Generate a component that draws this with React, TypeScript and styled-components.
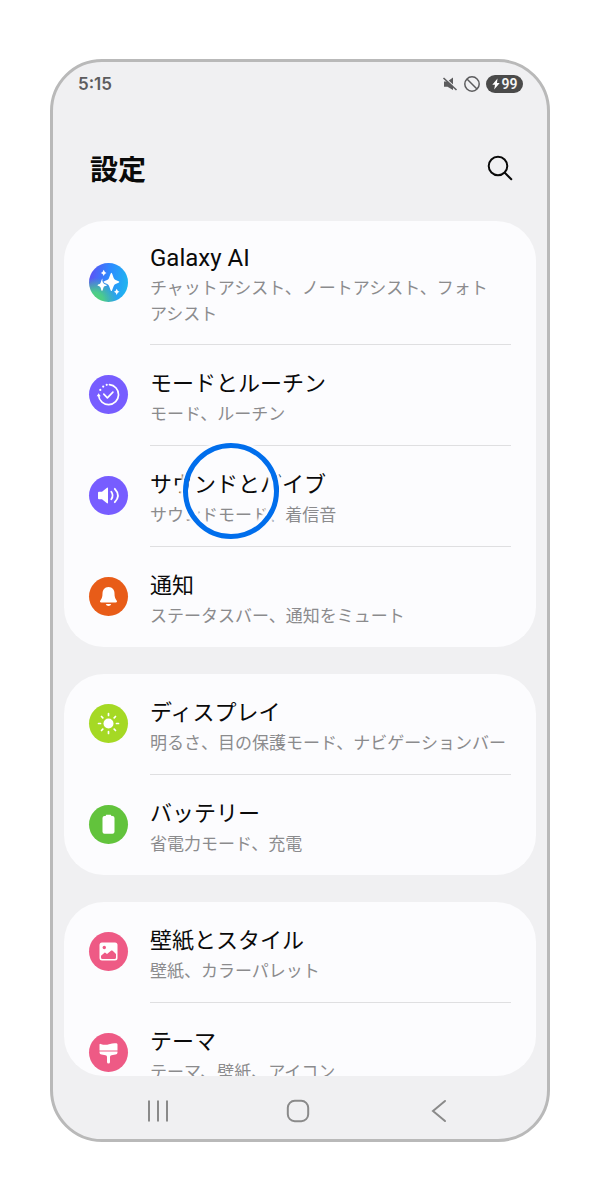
import React from 'react';
import styled, { createGlobalStyle } from 'styled-components';

const GlobalStyle = createGlobalStyle`
  *, *::before, *::after { box-sizing: border-box; }
  body {
    margin: 0;
    background: #ffffff;
    font-family: Roboto, 'Noto Sans CJK JP', sans-serif;
  }
`;

const Page = styled.div`
  display: flex;
  height: 100vh;
  padding: 59px 50px 58px;
`;

const Phone = styled.main`
  flex: 1;
  min-width: 0;
  display: flex;
  flex-direction: column;
  background: #f0f0f2;
  border: 3px solid #b9b9b9;
  border-radius: 52px;
  overflow: hidden;
`;

const StatusBar = styled.div`
  display: flex;
  align-items: center;
  justify-content: space-between;
  height: 44px;
  padding: 0 24px 0 25px;
  color: #5c5c5e;
`;

const Clock = styled.span`
  font-family: Inter, sans-serif;
  font-size: 17px;
  font-weight: 600;
  line-height: 20px;
`;

const StatusIcons = styled.div`
  display: flex;
  align-items: center;
  gap: 6px;
`;

const BatteryPill = styled.span`
  display: flex;
  align-items: center;
  justify-content: center;
  gap: 2px;
  width: 37px;
  height: 18px;
  border-radius: 9px;
  background: #4a4a4a;
  color: #f4f4f4;
  font-size: 14px;
  font-weight: 600;
  line-height: 18px;
`;

const Header = styled.header`
  display: flex;
  align-items: center;
  justify-content: space-between;
  height: 115px;
  padding: 8px 33px 0 37px;
`;

const Title = styled.h1`
  margin: 0;
  padding-top: 6px;
  font-size: 28px;
  font-weight: 700;
  line-height: 40px;
  color: #0a0a0a;
`;

const IconButton = styled.button`
  display: flex;
  align-items: center;
  justify-content: center;
  padding: 0;
  border: 0;
  background: none;
  color: inherit;
`;

const List = styled.div`
  flex: 1;
  min-height: 0;
  display: flex;
  flex-direction: column;
  gap: 27px;
  margin: 0 11px;
  border-radius: 0 0 40px 40px;
  overflow: hidden;
`;

const Card = styled.section`
  flex-shrink: 0;
  border-radius: 40px;
  background: #fcfcfe;
`;

const Row = styled.a`
  display: flex;
  align-items: center;
  gap: 22px;
  padding: 0 25px;
  color: inherit;
  text-decoration: none;
`;

const Badge = styled.span<{ $fill: string }>`
  flex-shrink: 0;
  display: flex;
  width: 39px;
  height: 39px;
  margin-bottom: 2px;
  border-radius: 50%;
  background: ${(p) => p.$fill};
`;

const RowText = styled.span`
  position: relative;
  flex: 1;
  min-width: 0;
  display: flex;
  flex-direction: column;
  justify-content: center;
  gap: 2px;
  min-height: 101px;
  padding: 22px 0 17px;
  border-bottom: 1px solid #dfdfe1;

  ${Row}:last-child & {
    min-height: 100px;
    border-bottom: 0;
  }
`;

const Name = styled.span<{ $latin?: boolean }>`
  font-size: ${(p) => (p.$latin ? 24 : 22)}px;
  line-height: 30px;
  color: #0a0a0a;
`;

const Detail = styled.span`
  font-size: 17px;
  line-height: 26px;
  color: #8b8b8d;
  white-space: pre-line;
`;

const TapRing = styled.span`
  position: absolute;
  left: 33px;
  top: -3px;
  width: 96px;
  height: 96px;
  border: 5px solid #006eec;
  border-radius: 50%;
  box-shadow: 0 0 2px 3px #fcfcfe, inset 0 0 2px 4px #fcfcfe;
`;

const NavBar = styled.nav`
  display: grid;
  grid-template-columns: repeat(3, 1fr);
  height: 63px;
  padding: 6px 38px 0 35px;
  color: #8a8a8a;
`;

const Glyph = ({ children }: { children: React.ReactNode }) => (
  <svg width="39" height="39" viewBox="0 0 39 39" fill="none" aria-hidden="true">
    {children}
  </svg>
);

const GalaxyGlyph = () => (
  <Glyph>
    <g fill="#fff">
      <path d="M22.400 9.700C23.200 9.700 24 13.500 25 15.500C26 17.400 30.300 18 30.300 18.900C30.300 19.800 26 20.500 25 22.400C24 24.300 23.200 28 22.400 28C21.600 28 20.800 24.300 19.800 22.400C18.800 20.500 14.600 19.800 14.600 18.900C14.600 18 18.800 17.400 19.800 15.500C20.800 13.500 21.600 9.700 22.400 9.700Z" />
      <path d="M13.600 15.500C13 17 13.500 19 14.500 20.200C15.500 21.300 17.500 21.500 18 22.300C17.500 23 15.500 22.800 14.700 24C14 25.200 13.800 28 13 28C12.200 28 12 25.200 11.400 24.200C10.800 23.200 8.500 23 8.500 22.300C8.500 21.600 10.800 21.300 11.400 20.300C12 19.200 12.500 16 13.600 15.500Z" />
      <path d="M14.700 6.800Q15.400 9.300 17.500 9.900Q15.400 10.500 14.700 13Q14 10.500 11.900 9.900Q14 9.300 14.700 6.800Z" />
      <path d="M27.700 25.700Q28.400 28.200 30.500 28.800Q28.400 29.400 27.700 31.900Q27 29.400 24.900 28.800Q27 28.200 27.700 25.700Z" />
    </g>
  </Glyph>
);

const RoutineGlyph = () => (
  <Glyph>
    <path d="M20.500 9.600A10 10 0 1 1 9.600 20.500" stroke="#fff" strokeWidth="1.700" strokeLinecap="round" />
    <path d="M14.800 19.200l3.600 3.600 5.500-5.600" stroke="#fff" strokeWidth="1.700" strokeLinecap="round" strokeLinejoin="round" />
    <path d="M7.700 21.300l1.900-3 2.200 3z" fill="#fff" />
    <g fill="#fff">
      <circle cx="17.700" cy="9.800" r="1.100" />
      <circle cx="14.200" cy="11.600" r="1.100" />
      <circle cx="11.300" cy="14.900" r="1.100" />
    </g>
  </Glyph>
);

const SoundGlyph = () => (
  <Glyph>
    <path d="M9 16.700Q9 15.800 10 15.800H13L18 11.700Q19 11.200 19 12.300V26.700Q19 27.800 18 27.300L13 23.200H10Q9 23.200 9 22.300Z" fill="#fff" />
    <path d="M22.300 15.800Q25 19.500 22.300 23.200M25.800 12.800Q32 19.500 25.800 26.200" stroke="#fff" strokeWidth="1.800" strokeLinecap="round" />
  </Glyph>
);

const BellGlyph = () => (
  <Glyph>
    <path d="M19.500 10C15.500 10 13.500 13 13.500 16.500C13.500 20 12.800 21.300 11.500 23.300C10.600 24.700 11 25.500 12.300 25.500H26.700C28 25.500 28.400 24.700 27.500 23.300C26.200 21.300 25.500 20 25.500 16.500C25.500 13 23.500 10 19.500 10Z" fill="#fff" />
    <path d="M16.800 26.900H22.200Q21.600 29 19.500 29Q17.400 29 16.800 26.900Z" fill="#fff" />
  </Glyph>
);

const SunGlyph = () => (
  <Glyph>
    <circle cx="19.500" cy="19.500" r="5" fill="#fff" />
    <path d="M19.500 9.500v2M19.500 27.500v2M9.500 19.500h2M27.500 19.500h2M12.500 12.500l1.300 1.300M25.200 25.200l1.300 1.300M12.500 26.500l1.300-1.300M25.200 13.800l1.300-1.300" stroke="#fff" strokeWidth="1.700" strokeLinecap="round" />
  </Glyph>
);

const BatteryGlyph = () => (
  <Glyph>
    <path d="M16.800 11V10.300Q16.800 9.700 17.400 9.700H21.600Q22.200 9.700 22.200 10.300V11H23.500Q25.500 11 25.500 13V26.700Q25.500 28.700 23.500 28.700H15.500Q13.500 28.700 13.500 26.700V13Q13.500 11 15.500 11Z" fill="#fff" />
  </Glyph>
);

const PictureGlyph = ({ hole }: { hole: string }) => (
  <Glyph>
    <rect x="10.500" y="10.500" width="18" height="18" rx="2.500" fill="#fff" />
    <circle cx="15.300" cy="15.500" r="1.700" fill={hole} />
    <path d="M12 23.800L15.500 20.700Q16 20.300 16.700 20.900L18 22L22.300 18.600Q23 18.200 23.700 18.800L27 22V25.500Q27 27 25.500 27H13.500Q12 27 12 25.500Z" fill={hole} />
  </Glyph>
);

const BrushGlyph = () => (
  <Glyph>
    <path d="M10.500 11.700Q10.500 10.700 11.500 10.900C15 12 17.500 11.900 20 11.200C23 10.200 25.500 10 27.500 10.300Q28.500 10.500 28.500 11.500V17.500H10.500Z" fill="#fff" />
    <path d="M10.500 18.500H28.500V19.500Q28.500 21.300 26.500 21.600L22.500 22.200Q21 22.500 21 24V29Q21 30.500 19.500 30.500Q18 30.500 18 29V24Q18 22.500 16.500 22.200L12.500 21.600Q10.500 21.300 10.500 19.500Z" fill="#fff" />
  </Glyph>
);

const PINK = '#ee5a85';

interface Item {
  name: string;
  detail: string;
  fill: string;
  glyph: React.ReactNode;
  latin?: boolean;
  tapped?: boolean;
}

const groups: Item[][] = [
  [
    {
      name: 'Galaxy AI',
      detail: 'チャットアシスト、ノートアシスト、フォト\nアシスト',
      fill: 'radial-gradient(circle at 14% 98%, #55d56c 0%, #4bcb8c 18%, transparent 46%), linear-gradient(100deg, #5a55f5 8%, #2b8cff 50%, #1fb8ee 95%)',
      glyph: <GalaxyGlyph />,
      latin: true,
    },
    { name: 'モードとルーチン', detail: 'モード、ルーチン', fill: '#775dff', glyph: <RoutineGlyph /> },
    { name: 'サウンドとバイブ', detail: 'サウンドモード、着信音', fill: '#775dff', glyph: <SoundGlyph />, tapped: true },
    { name: '通知', detail: 'ステータスバー、通知をミュート', fill: '#e85c18', glyph: <BellGlyph /> },
  ],
  [
    { name: 'ディスプレイ', detail: '明るさ、目の保護モード、ナビゲーションバー', fill: '#a5d924', glyph: <SunGlyph /> },
    { name: 'バッテリー', detail: '省電力モード、充電', fill: '#62c33c', glyph: <BatteryGlyph /> },
  ],
  [
    { name: '壁紙とスタイル', detail: '壁紙、カラーパレット', fill: PINK, glyph: <PictureGlyph hole={PINK} /> },
    { name: 'テーマ', detail: 'テーマ、壁紙、アイコン', fill: PINK, glyph: <BrushGlyph /> },
  ],
];

export default function App() {
  return (
    <>
      <GlobalStyle />
      <Page>
        <Phone>
          <StatusBar>
            <Clock>5:15</Clock>
            <StatusIcons>
              <svg width="16" height="16" viewBox="0 0 16 16" aria-hidden="true">
                <path d="M2 5.500H5.500L11 1.500V14L5.500 10.700H2Z" fill="#5c5c5e" />
                <path d="M2.200 1.200L15.500 13.500" stroke="#f0f0f2" strokeWidth="1.300" />
                <path d="M1.500 2L14.500 14" stroke="#5c5c5e" strokeWidth="1.600" />
              </svg>
              <svg width="16" height="16" viewBox="0 0 16 16" fill="none" stroke="#5c5c5e" strokeWidth="1.500" aria-hidden="true">
                <circle cx="8" cy="8" r="7.200" />
                <path d="M3 3l10 10" />
              </svg>
              <BatteryPill>
                <svg width="8" height="12" viewBox="0 0 8 12" aria-hidden="true">
                  <path d="M5.500 0.500L0.300 6.800H3L2.200 11.500L7.700 4.900H5Z" fill="#fff" />
                </svg>
                99
              </BatteryPill>
            </StatusIcons>
          </StatusBar>

          <Header>
            <Title>設定</Title>
            <IconButton type="button" aria-label="検索">
              <svg width="28" height="28" viewBox="0 0 28 28" fill="none" stroke="#0a0a0a" strokeWidth="2" strokeLinecap="round">
                <circle cx="12" cy="12" r="9.300" />
                <path d="M18.800 18.800L25.300 25.300" />
              </svg>
            </IconButton>
          </Header>

          <List>
            {groups.map((items) => (
              <Card key={items[0].name}>
                {items.map((item) => (
                  <Row key={item.name} href="#">
                    <Badge $fill={item.fill}>{item.glyph}</Badge>
                    <RowText>
                      <Name $latin={item.latin}>{item.name}</Name>
                      <Detail>{item.detail}</Detail>
                      {item.tapped && <TapRing />}
                    </RowText>
                  </Row>
                ))}
              </Card>
            ))}
          </List>

          <NavBar>
            <IconButton type="button" aria-label="履歴">
              <svg width="24" height="24" viewBox="0 0 24 24" stroke="currentColor" strokeWidth="2">
                <path d="M3 1.500v21M12 1.500v21M21 1.500v21" />
              </svg>
            </IconButton>
            <IconButton type="button" aria-label="ホーム">
              <svg width="24" height="24" viewBox="0 0 24 24" fill="none" stroke="currentColor" strokeWidth="2">
                <rect x="1.800" y="1.800" width="20.400" height="20.400" rx="7" />
              </svg>
            </IconButton>
            <IconButton type="button" aria-label="戻る">
              <svg width="24" height="24" viewBox="0 0 24 24" fill="none" stroke="currentColor" strokeWidth="2" strokeLinecap="round">
                <path d="M18 2L6 12L18 22" />
              </svg>
            </IconButton>
          </NavBar>
        </Phone>
      </Page>
    </>
  );
}
